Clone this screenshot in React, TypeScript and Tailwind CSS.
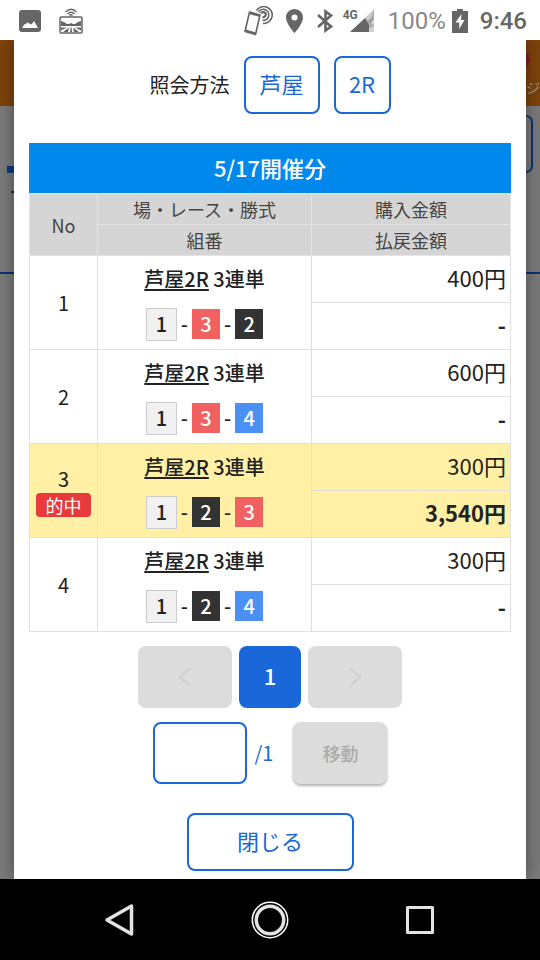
import React, { useState } from 'react';

interface Bet {
  no: number;
  place: string;
  type: string;
  picks: number[];
  amount: string;
  payout: string;
  hit?: boolean;
}

const BETS: Bet[] = [
  { no: 1, place: '芦屋2R', type: '3連単', picks: [1, 3, 2], amount: '400円', payout: '-' },
  { no: 2, place: '芦屋2R', type: '3連単', picks: [1, 3, 4], amount: '600円', payout: '-' },
  { no: 3, place: '芦屋2R', type: '3連単', picks: [1, 2, 3], amount: '300円', payout: '3,540円', hit: true },
  { no: 4, place: '芦屋2R', type: '3連単', picks: [1, 2, 4], amount: '300円', payout: '-' },
];

const BOAT_STYLES: Record<number, string> = {
  1: 'w-[31px] h-[33px] bg-[#f1f1f1] border border-[#cccccc] text-[#222222]',
  2: 'w-7 h-[30px] bg-[#333333] text-white',
  3: 'w-7 h-[30px] bg-[#f26161] text-white',
  4: 'w-7 h-[30px] bg-[#4a90f5] text-white',
};

const outlineButton =
  'border-2 border-[#1967d9] rounded-lg bg-white text-[#1967d9] text-[22px] leading-none';

function StatusBar() {
  return (
    <header className="h-10 shrink-0 flex items-center justify-between pt-0.5 pl-[19px] pr-[13px] bg-white text-[#666666]">
      <div className="flex items-center gap-[18px]">
        <svg className="w-[22px] h-[22px]" viewBox="0 0 22 22" fill="currentColor">
          <path
            fillRule="evenodd"
            d="M3 0H19Q22 0 22 3V19Q22 22 19 22H3Q0 22 0 19V3Q0 0 3 0ZM3 18H19L15 11L12.500 14.500L8 12.500L6.500 14.500L5.500 14Z"
          />
        </svg>
        <svg className="w-6 h-[26px]" viewBox="0 0 24 26" fill="none" stroke="currentColor">
          <path d="M6.500 4Q12 -1.500 17.500 4M8.500 6Q12 2.500 15.500 6" strokeWidth="1.300" />
          <path d="M10.500 7.500Q12 6 13.500 7.500" strokeWidth="1.500" />
          <rect x="1" y="9" width="22" height="16" rx="1" strokeWidth="1.500" />
          <path d="M2 13L5 14L8 16H10L12 15L14 16H16L19 14L22 13V18H2Z" fill="currentColor" stroke="none" />
          <path d="M2 19.500H8L2 22.500ZM22 19.500H16L22 22.500ZM10 19.500L4 24H9ZM14 19.500L20 24H15ZM11.500 19.500H12.500L13 24H11Z" fill="currentColor" stroke="none" />
        </svg>
      </div>
      <div className="flex items-center font-['Roboto',sans-serif]">
        <svg className="w-[30px] h-[30px]" viewBox="0 0 30 30" fill="none" stroke="currentColor">
          <path d="M5.500 6L16 9L11.500 28.500L1 25.500Z" strokeWidth="1.600" strokeLinejoin="round" />
          <path d="M5.500 7L16 10M1.500 24.500L12 27.500" strokeWidth="2" />
          <path d="M12.500 4.500A8.500 8.500 0 1 1 19 17.500" strokeWidth="1.600" />
          <path d="M14.500 6.200A5.500 5.500 0 1 1 18.500 14.300" strokeWidth="1.600" />
          <path d="M17 7.500A2.500 2.500 0 1 1 18.500 11" strokeWidth="2.200" />
        </svg>
        <svg className="w-[17px] h-6 ml-3" viewBox="0 0 17 24" fill="currentColor">
          <path
            fillRule="evenodd"
            d="M8.500 0C3.800 0 0 3.700 0 8.400C0 14.600 8.500 24 8.500 24S17 14.600 17 8.400C17 3.700 13.200 0 8.500 0ZM8.500 5.400A3 3 0 1 1 8.500 11.400A3 3 0 1 1 8.500 5.400Z"
          />
        </svg>
        <svg className="w-4 h-6 ml-[14px]" viewBox="0 0 16 24" fill="none" stroke="currentColor" strokeWidth="2.600">
          <path d="M1 6L14 17.500L8.500 21.500V2.500L14 6.500L1 18" />
        </svg>
        <span className="ml-2.5 mb-3 text-xs leading-none font-bold">4G</span>
        <svg className="w-6 h-6 -ml-2" viewBox="0 0 24 24" fill="currentColor">
          <path d="M24 0V23H17Z" opacity="0.300" />
          <path d="M24 0L14 10L18 16L24 10Z" opacity="0.350" />
          <path d="M0 23L15 9L19 16V23Z" />
          <path d="M16 12L24 8L21 14L24 17L18 20Z" opacity="0.350" />
        </svg>
        <span className="ml-[14px] text-2xl leading-none text-[#888888]">100%</span>
        <svg className="w-4 h-6 ml-1.5" viewBox="0 0 16 24" fill="currentColor">
          <path fillRule="evenodd" d="M5 0H11V2H16V24H0V2H5ZM9.500 5L3.500 13.500H7.200V20L12.500 11H9Z" />
        </svg>
        <span className="ml-3 text-2xl leading-none font-medium">9:46</span>
      </div>
    </header>
  );
}

/* visible edges of the page behind the dialog */
function LeftEdge() {
  return (
    <div className="w-[14px] shrink-0 bg-[#7b7b7b] overflow-hidden">
      <div className="h-[66px] bg-[#7d430b]" />
      <div className="h-[168px] pt-[60px] border-b-2 border-[#0b3474]">
        <div className="ml-[7px] h-[7px] bg-[#0b3a80]" />
        <div className="ml-[11px] mt-[18px] h-0.5 bg-[#222222]" />
      </div>
    </div>
  );
}

function RightEdge() {
  return (
    <div className="w-[14px] shrink-0 bg-[#7b7b7b] overflow-hidden">
      <div className="h-[66px] pt-3 bg-[#7d430b]">
        <div className="-ml-3 w-4 h-4 rounded-full bg-[#8a1c26]" />
        <div className="mt-3 text-sm leading-none text-[#999999]">ジ</div>
      </div>
      <div className="h-[168px] pt-[9px] border-b-2 border-[#0b3474]">
        <div className="mr-[7px] h-[58px] border-2 border-l-0 border-[#0b3474] rounded-r-lg" />
      </div>
    </div>
  );
}

function Boats({ picks }: { picks: number[] }) {
  return (
    <div className="mt-[15px] flex items-center justify-center gap-1 text-xl leading-none font-medium">
      {picks.map((pick, i) => (
        <React.Fragment key={pick}>
          {i > 0 && <span>-</span>}
          <span className={`flex items-center justify-center ${BOAT_STYLES[pick]}`}>{pick}</span>
        </React.Fragment>
      ))}
    </div>
  );
}

function BetRows({ bet }: { bet: Bet }) {
  const bg = bet.hit ? 'bg-[#fff0a5]' : 'bg-white';
  return (
    <tbody className={bg}>
      <tr className="h-[47px]">
        <td rowSpan={2} className="border border-[#e0e0e0] text-center text-xl leading-7">
          {bet.no}
          {bet.hit && (
            <div className="mx-1.5 h-6 rounded-sm bg-[#e83a3a] text-lg leading-6 text-white">的中</div>
          )}
        </td>
        <td rowSpan={2} className="border border-[#e0e0e0] text-center">
          <div className="text-xl leading-7 font-medium">
            <a href="#race" className="underline decoration-2 underline-offset-2">{bet.place}</a> {bet.type}
          </div>
          <Boats picks={bet.picks} />
        </td>
        <td className="border border-[#e0e0e0] pr-1 pb-1 text-right text-[22px] leading-7">{bet.amount}</td>
      </tr>
      <tr className="h-[47px]">
        <td className="border border-[#e0e0e0] pr-1 pb-1 text-right text-[22px] leading-7 font-bold">{bet.payout}</td>
      </tr>
    </tbody>
  );
}

function BetTable() {
  return (
    <table className="mt-[29px] w-full table-fixed border-collapse">
      <caption className="h-[50px] bg-[#0088ec] text-[22px] leading-[48px] font-medium text-white">
        5/17開催分
      </caption>
      <colgroup>
        <col className="w-[68px]" />
        <col />
        <col className="w-[199px]" />
      </colgroup>
      <thead className="bg-[#d5d5d5] text-lg leading-6 text-[#444444]">
        <tr className="h-[31px]">
          <th rowSpan={2} className="border border-[#e5e5e5] font-normal">No</th>
          <th className="border border-[#e5e5e5] font-normal">場・レース・勝式</th>
          <th className="border border-[#e5e5e5] font-normal">購入金額</th>
        </tr>
        <tr className="h-[31px]">
          <th className="border border-[#e5e5e5] font-normal">組番</th>
          <th className="border border-[#e5e5e5] font-normal">払戻金額</th>
        </tr>
      </thead>
      {BETS.map((bet) => (
        <BetRows key={bet.no} bet={bet} />
      ))}
    </table>
  );
}

function Pager() {
  const [page, setPage] = useState('');
  return (
    <>
      <div className="mt-[14px] flex justify-center gap-[7px]">
        <button disabled aria-label="前へ" className="w-[94px] h-[62px] rounded-lg bg-[#dcdcdc] text-[#d0d0d0] flex items-center justify-center">
          <svg className="w-3 h-5" viewBox="0 0 12 20" fill="none" stroke="currentColor" strokeWidth="2">
            <path d="M11 1L1 10L11 19" />
          </svg>
        </button>
        <button className="w-[62px] h-[62px] pb-1 rounded-lg bg-[#1967d9] text-[22px] leading-none font-medium text-white">1</button>
        <button disabled aria-label="次へ" className="w-[94px] h-[62px] rounded-lg bg-[#dcdcdc] text-[#d0d0d0] flex items-center justify-center">
          <svg className="w-3 h-5" viewBox="0 0 12 20" fill="none" stroke="currentColor" strokeWidth="2">
            <path d="M1 1L11 10L1 19" />
          </svg>
        </button>
      </div>
      <div className="mt-[14px] flex items-center justify-center">
        <input
          type="text"
          aria-label="ページ"
          value={page}
          onChange={(e) => setPage(e.target.value)}
          className="w-[94px] h-[62px] px-3 rounded-lg border-2 border-[#1967d9] text-center text-xl outline-none"
        />
        <span className="ml-2 mr-5 text-xl leading-none text-[#1967d9]">/1</span>
        <button disabled className="w-[94px] h-[62px] rounded-lg bg-[#dcdcdc] text-lg font-medium text-[#aaaaaa] shadow-[0_2px_3px_rgba(0,0,0,0.3)]">
          移動
        </button>
      </div>
    </>
  );
}

function NavBar() {
  return (
    <nav className="h-[81px] shrink-0 flex items-center justify-center gap-[114px] bg-black text-[#e3e3e3]">
      <button aria-label="戻る">
        <svg className="w-9 h-9" viewBox="0 0 36 36" fill="none" stroke="currentColor" strokeWidth="3.500" strokeLinejoin="round">
          <path d="M5 18L29.500 4V32Z" />
        </svg>
      </button>
      <button aria-label="ホーム">
        <svg className="w-9 h-9 overflow-visible" viewBox="0 0 36 36" fill="none" stroke="currentColor">
          <circle cx="18" cy="18" r="17.700" stroke="#ffffff" strokeWidth="1.500" />
          <circle cx="18" cy="18" r="13.700" strokeWidth="3.500" />
        </svg>
      </button>
      <button aria-label="アプリ履歴">
        <svg className="w-9 h-9" viewBox="0 0 36 36" fill="none" stroke="currentColor" strokeWidth="3" strokeLinejoin="round">
          <rect x="5.500" y="5.500" width="25" height="25" />
        </svg>
      </button>
    </nav>
  );
}

export default function App() {
  return (
    <div className="min-h-screen flex flex-col bg-white font-['Noto_Sans_CJK_JP',sans-serif] text-[#222222]">
      <StatusBar />
      <div className="flex-1 flex">
        <LeftEdge />
        <main
          role="dialog"
          className="relative flex-1 min-w-0 flex flex-col px-[15px] pt-4 pb-2 bg-white shadow-[0_0_16px_rgba(0,0,0,0.4)] [clip-path:inset(0_-14px)]"
        >
          <div className="flex items-center justify-center gap-[14px]">
            <span className="text-xl leading-none">照会方法</span>
            <button className={`w-[76px] h-[58px] pb-1 ${outlineButton}`}>芦屋</button>
            <button className={`w-[57px] h-[58px] pb-1 ${outlineButton}`}>2R</button>
          </div>
          <BetTable />
          <Pager />
          <button className={`mt-[29px] self-center w-[167px] h-[58px] pb-1 ${outlineButton}`}>閉じる</button>
        </main>
        <RightEdge />
      </div>
      <NavBar />
    </div>
  );
}
